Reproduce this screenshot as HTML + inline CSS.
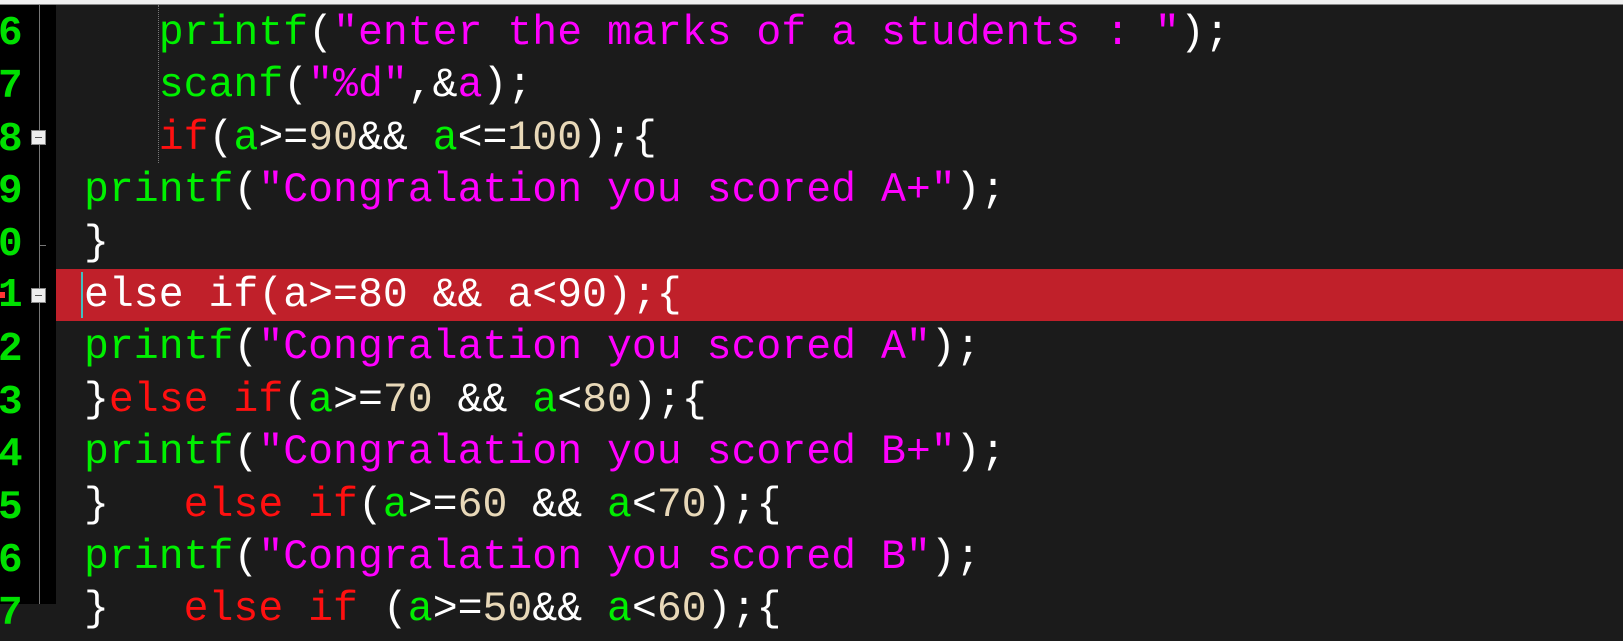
<!DOCTYPE html>
<html><head><meta charset="utf-8"><style>
html,body{margin:0;padding:0;width:1623px;height:604px;overflow:hidden;background:#1b1b1b;}
#top{position:absolute;left:0;top:0;width:1623px;height:4px;background:#f0f0f0;border-bottom:1px solid #888;}
#gut{position:absolute;left:0;top:5px;width:56px;height:599px;background:#000;}
#gline{position:absolute;left:39px;top:5px;width:1px;height:599px;background:#777;}
.ln{position:absolute;left:-2px;width:40px;font:bold 41px/52.8px "Liberation Mono",monospace;color:#00e000;}
.code{position:absolute;left:84px;top:8px;font:41.5px/52.4px "Liberation Mono",monospace;color:#fff;white-space:pre;}
.g{color:#00f000}.m{color:#ff00ff}.r{color:#ff1010}.t{color:#e8d8b8}
#hl{position:absolute;left:56px;top:269px;width:1567px;height:52px;background:#c0202a;}
.box{position:absolute;left:31px;width:15px;height:15px;background:#eee;border:1px solid #888;box-sizing:border-box;}
.box:after{content:"";position:absolute;left:3px;top:6px;width:7px;height:1px;background:#555;}
#guide{position:absolute;left:158px;top:5px;height:158px;border-left:1px dotted #777;}
#caret{position:absolute;left:81px;top:272px;width:2px;height:46px;background:#40c0c0;}
</style></head><body>
<div id="top"></div>
<div id="gut"></div>
<div id="gline"></div>
<div id="hl"></div>
<div id="guide"></div>
<div class="ln" style="top:8px">6</div>
<div class="ln" style="top:60.8px">7</div>
<div class="ln" style="top:113.6px">8</div>
<div class="ln" style="top:166.4px">9</div>
<div class="ln" style="top:219.2px">0</div>
<div class="ln" style="top:270px">1</div>
<div class="ln" style="top:323.8px">2</div>
<div class="ln" style="top:376.6px">3</div>
<div class="ln" style="top:429.4px">4</div>
<div class="ln" style="top:482.2px">5</div>
<div class="ln" style="top:535px">6</div>
<div class="ln" style="top:587.8px">7</div>
<div class="box" style="top:130px"></div>
<div class="box" style="top:288px"></div>
<div style="position:absolute;left:39px;top:245px;width:7px;height:1px;background:#777"></div>
<div style="position:absolute;left:0;top:292px;width:5px;height:6px;background:#f33"></div>
<div id="caret"></div>
<div class="code">   <span class="g">printf</span>(<span class="m">"enter the marks of a students : "</span>);
   <span class="g">scanf</span>(<span class="m">"%d"</span>,&amp;<span class="m">a</span>);
   <span class="r">if</span>(<span class="g">a</span>&gt;=<span class="t">90</span>&amp;&amp; <span class="g">a</span>&lt;=<span class="t">100</span>);{
<span class="g">printf</span>(<span class="m">"Congralation you scored A+"</span>);
}
else if(a&gt;=80 &amp;&amp; a&lt;90);{
<span class="g">printf</span>(<span class="m">"Congralation you scored A"</span>);
}<span class="r">else if</span>(<span class="g">a</span>&gt;=<span class="t">70</span> &amp;&amp; <span class="g">a</span>&lt;<span class="t">80</span>);{
<span class="g">printf</span>(<span class="m">"Congralation you scored B+"</span>);
}   <span class="r">else if</span>(<span class="g">a</span>&gt;=<span class="t">60</span> &amp;&amp; <span class="g">a</span>&lt;<span class="t">70</span>);{
<span class="g">printf</span>(<span class="m">"Congralation you scored B"</span>);
}   <span class="r">else if</span> (<span class="g">a</span>&gt;=<span class="t">50</span>&amp;&amp; <span class="g">a</span>&lt;<span class="t">60</span>);{</div>
</body></html>
